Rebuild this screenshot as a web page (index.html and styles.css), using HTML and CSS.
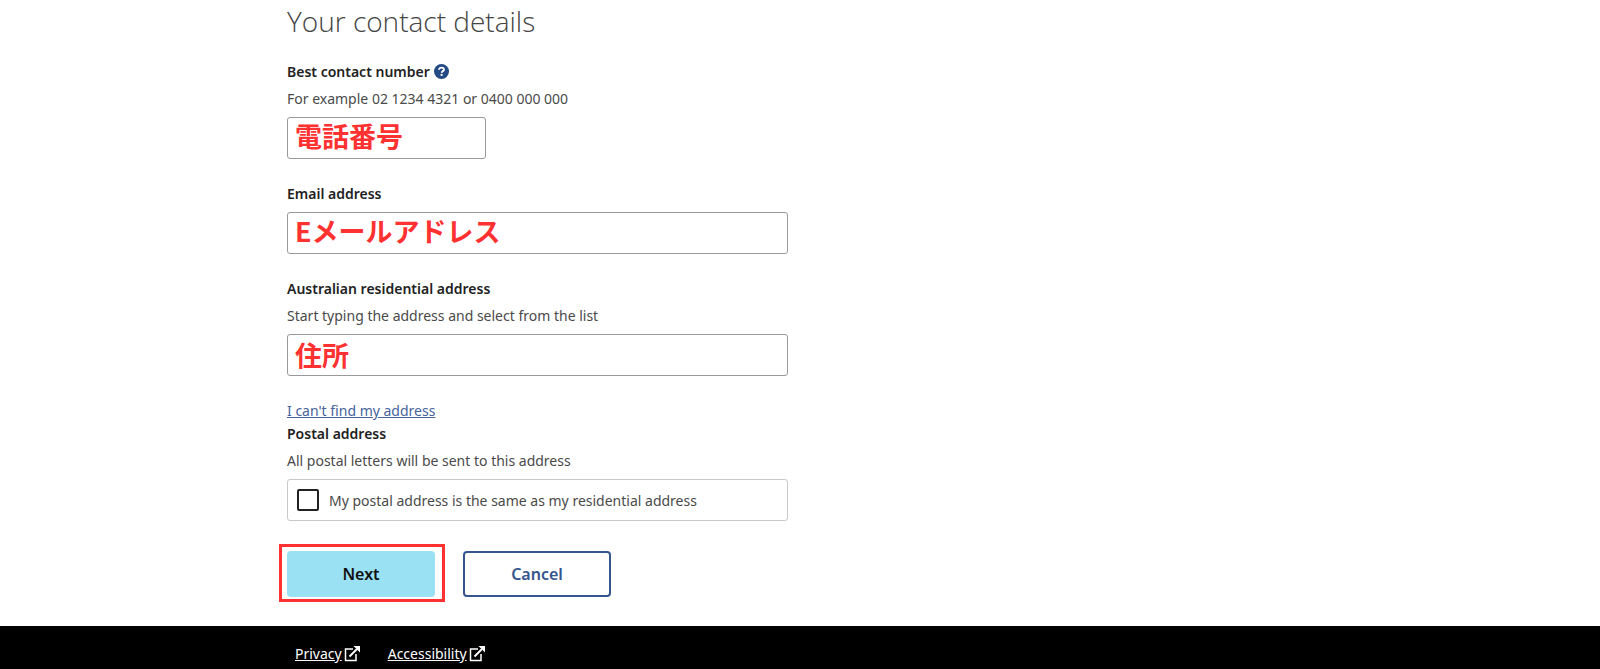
FILE: index.html
```html
<!DOCTYPE html>
<html lang="en">
<head>
<meta charset="utf-8">
<meta name="viewport" content="width=device-width, initial-scale=1">
<title>Your contact details</title>
<link rel="stylesheet" href="styles.css">
</head>
<body>
<main class="page">
  <h1 class="title">Your contact details</h1>
  <form class="form">
    <div class="field">
      <div class="label-row">
        <label class="label" for="phone">Best contact number</label>
        <button class="help" type="button" aria-label="Help">
          <svg viewBox="0 0 16 16" aria-hidden="true"><circle cx="8" cy="8" r="8" fill="#234a84"/><path d="M5.400 6.200C5.400 4.600 6.500 3.800 8 3.800s2.600.9 2.600 2.200C10.600 7.600 8.200 7.600 8.200 9.300" fill="none" stroke="#fff" stroke-width="2"/><circle cx="8.100" cy="11.700" r="1.200" fill="#fff"/></svg>
        </button>
      </div>
      <p class="hint">For example 02 1234 4321 or 0400 000 000</p>
      <input class="input input-short" id="phone" type="text" value="電話番号">
    </div>
    <div class="field">
      <label class="label" for="email">Email address</label>
      <input class="input" id="email" type="text" value="Eメールアドレス">
    </div>
    <div class="field">
      <label class="label" for="address">Australian residential address</label>
      <p class="hint">Start typing the address and select from the list</p>
      <input class="input input-low" id="address" type="text" value="住所">
    </div>
    <a class="link" href="#">I can't find my address</a>
    <fieldset class="postal">
      <legend class="label">Postal address</legend>
      <p class="hint">All postal letters will be sent to this address</p>
      <label class="option" for="same"><input class="check" id="same" type="checkbox">My postal address is the same as my residential address</label>
    </fieldset>
    <div class="actions">
      <div class="highlight"><button class="button button-primary" type="button">Next</button></div>
      <button class="button button-outline" type="button">Cancel</button>
    </div>
  </form>
</main>
<footer class="footer">
  <a class="footer-link" href="#"><span class="footer-text">Privacy</span><svg class="external" viewBox="0 0 16 16" aria-hidden="true"><path d="M9 3H1.500v11.500H12V8" fill="none" stroke="#fff" stroke-width="1.500"/><path d="M5.500 10.500 13 3" fill="none" stroke="#fff" stroke-width="2"/><path d="M9.500 0H16v6.500z" fill="#fff"/></svg></a>
  <a class="footer-link" href="#"><span class="footer-text">Accessibility</span><svg class="external" viewBox="0 0 16 16" aria-hidden="true"><path d="M9 3H1.500v11.500H12V8" fill="none" stroke="#fff" stroke-width="1.500"/><path d="M5.500 10.500 13 3" fill="none" stroke="#fff" stroke-width="2"/><path d="M9.500 0H16v6.500z" fill="#fff"/></svg></a>
</footer>
</body>
</html>
```
FILE: styles.css
```css
* {
  box-sizing: border-box;
}

body {
  margin: 0;
  min-height: 100vh;
  display: flex;
  flex-direction: column;
  background: #fff;
  color: #4a4a4a;
  font-family: "Segoe UI", "Noto Sans", "Open Sans", sans-serif;
  font-size: 14px;
  line-height: 23px;
  overflow-x: hidden;
}

.page {
  padding: 0 18%;
  padding-left: calc(18% - 1px);
}

.title {
  margin: 0 0 18px;
  color: #444;
  font-family: "Segoe UI", "Open Sans", sans-serif;
  font-size: 28px;
  font-weight: 300;
  line-height: 42px;
}

.form {
  max-width: 501px;
}

.field {
  margin-bottom: 23px;
}

.label-row {
  display: flex;
  align-items: center;
  gap: 4px;
}

.label {
  display: block;
  padding: 0;
  color: #222;
  font-weight: 600;
}

.help {
  width: 15px;
  height: 15px;
  padding: 0;
  border: 0;
  background: none;
}

.help svg {
  display: block;
}

.hint {
  margin: 4px 0 0;
}

.input {
  display: block;
  width: 100%;
  height: 42px;
  margin-top: 7px;
  padding: 0 7px 6px;
  border: 1px solid #999;
  border-radius: 3px;
  background: #fff;
  color: #ff3131;
  font-family: "Noto Sans CJK JP", sans-serif;
  font-size: 27px;
  font-weight: 700;
}

.input-short {
  width: 199px;
}

.input-low {
  padding-bottom: 2px;
}

.link {
  display: block;
  width: fit-content;
  color: #46649b;
}

.postal {
  margin: 0;
  padding: 0;
  border: 0;
}

.option {
  display: flex;
  align-items: center;
  gap: 10px;
  height: 42px;
  margin-top: 7px;
  padding: 0 9px;
  border: 1px solid #c8c8c8;
  border-radius: 3px;
}

.check {
  appearance: none;
  width: 22px;
  height: 22px;
  margin: 0;
  border: 2px solid #222;
  border-radius: 2px;
}

.actions {
  display: flex;
  gap: 28px;
  padding: 30px 0 29px;
}

.highlight {
  position: relative;
}

.highlight::after {
  content: "";
  position: absolute;
  inset: -7px -10px -5px -8px;
  border: 3px solid #ff3131;
  pointer-events: none;
}

.button {
  display: block;
  width: 148px;
  height: 46px;
  border-radius: 4px;
  font: inherit;
  font-size: 16px;
  font-weight: 600;
}

.button-primary {
  border: 0;
  background: #99e1f3;
  color: #111;
}

.button-outline {
  border: 2px solid #35568d;
  background: #fff;
  color: #35568d;
}

.footer {
  display: flex;
  flex-grow: 1;
  gap: 28px;
  padding: 16px 18% 4px;
  padding-left: calc(18% + 7px);
  background: #000;
}

.footer-link {
  display: flex;
  align-items: center;
  gap: 2px;
  height: 23px;
  color: #fff;
}

.external {
  width: 16px;
  height: 16px;
}
```
